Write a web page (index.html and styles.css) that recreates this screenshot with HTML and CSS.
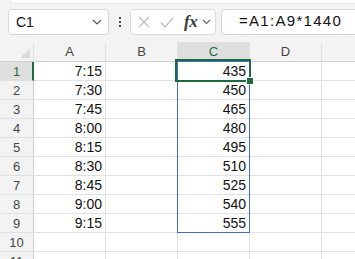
FILE: index.html
```html
<!DOCTYPE html>
<html lang="en">
<head>
    <meta charset="UTF-8">
    <title>Sheet1</title>
    <link rel="stylesheet" href="styles.css">
</head>
<body>
    <div class="ribbon"></div>

    <div class="formula-bar">
        <div class="name-box">
            <span>C1</span>
            <svg class="chev" width="10" height="6" viewBox="0 0 10 6"><path d="M1 1l4 4 4-4" fill="none" stroke="#555" stroke-width="1.2"/></svg>
        </div>
        <div class="more"><i></i><i></i><i></i></div>
        <div class="fx-box">
            <svg width="12" height="12" viewBox="0 0 12 12"><path d="M1 1l10 10M11 1L1 11" stroke="#bdbdbd" stroke-width="1.2" fill="none"/></svg>
            <svg width="14" height="11" viewBox="0 0 14 11"><path d="M1 5.5l4 4.5 8-9" stroke="#bdbdbd" stroke-width="1.2" fill="none"/></svg>
            <span class="fx">fx</span>
            <svg width="9" height="6" viewBox="0 0 9 6"><path d="M1 1l3.5 3.5L8 1" fill="none" stroke="#666" stroke-width="1.1"/></svg>
        </div>
        <div class="formula">=A1:A9*1440</div>
    </div>

    <div class="sheet">
        <div class="grid">
            <div class="head corner"><span class="tri"></span></div>
            <div class="head">A</div>
            <div class="head">B</div>
            <div class="head sel">C</div>
            <div class="head">D</div>
            <div class="head"></div>

            <div class="rh sel">1</div><div class="c">7:15</div><div class="c"></div><div class="c">435</div><div class="c"></div><div class="c"></div>
            <div class="rh">2</div><div class="c">7:30</div><div class="c"></div><div class="c">450</div><div class="c"></div><div class="c"></div>
            <div class="rh">3</div><div class="c">7:45</div><div class="c"></div><div class="c">465</div><div class="c"></div><div class="c"></div>
            <div class="rh">4</div><div class="c">8:00</div><div class="c"></div><div class="c">480</div><div class="c"></div><div class="c"></div>
            <div class="rh">5</div><div class="c">8:15</div><div class="c"></div><div class="c">495</div><div class="c"></div><div class="c"></div>
            <div class="rh">6</div><div class="c">8:30</div><div class="c"></div><div class="c">510</div><div class="c"></div><div class="c"></div>
            <div class="rh">7</div><div class="c">8:45</div><div class="c"></div><div class="c">525</div><div class="c"></div><div class="c"></div>
            <div class="rh">8</div><div class="c">9:00</div><div class="c"></div><div class="c">540</div><div class="c"></div><div class="c"></div>
            <div class="rh">9</div><div class="c">9:15</div><div class="c"></div><div class="c">555</div><div class="c"></div><div class="c"></div>
            <div class="rh">10</div><div class="c"></div><div class="c"></div><div class="c"></div><div class="c"></div><div class="c"></div>
            <div class="rh">11</div><div class="c"></div><div class="c"></div><div class="c"></div><div class="c"></div><div class="c"></div>
        </div>
        <div class="range"></div>
        <div class="active"><span class="handle"></span></div>
    </div>
</body>
</html>
```

FILE: styles.css
```css
body {
    margin: 0;
    width: 355px;
    height: 259px;
    overflow: hidden;
    background: #f3f3f3;
    font-family: "Liberation Sans", Arial, sans-serif;
    color: #222;
}
.ribbon {
    height: 3px;
    margin-left: 10px;
    background: #fff;
    border: 1px solid #e3e3e3;
    border-top: none;
    border-right: none;
    border-radius: 0 0 0 6px;
}
.formula-bar {
    display: flex;
    align-items: center;
    height: 26px;
    margin-top: 5px;
    padding-left: 8px;
}
.name-box {
    display: flex;
    align-items: center;
    justify-content: space-between;
    box-sizing: border-box;
    width: 101px;
    height: 26px;
    padding: 0 6px 0 7px;
    background: #fff;
    border: 1px solid #d6d6d6;
    border-radius: 4px;
    font-size: 14px;
    color: #111;
}
.more {
    display: flex;
    flex-direction: column;
    gap: 2px;
    width: 21px;
    align-items: center;
}
.more i {
    width: 2px;
    height: 2px;
    background: #444;
}
.fx-box {
    display: flex;
    align-items: center;
    box-sizing: border-box;
    width: 86px;
    height: 26px;
    padding-left: 7px;
    gap: 9px;
    background: #fff;
    border: 1px solid #dcdcdc;
    border-radius: 4px;
}
.fx-box svg:nth-child(2) {
    margin-left: 1px;
}
.fx {
    font-family: "Liberation Serif", "Times New Roman", serif;
    font-style: italic;
    font-weight: bold;
    font-size: 17px;
    color: #3a3a3a;
    margin-left: 1px;
    margin-right: -4px;
    letter-spacing: -0.5px;
}
.formula {
    flex: 1;
    box-sizing: border-box;
    height: 26px;
    margin-left: 5px;
    margin-right: -20px;
    padding: 2px 0 0 17px;
    background: #fff;
    border: 1px solid #d6d6d6;
    border-radius: 4px;
    font-size: 15px;
    letter-spacing: 1.3px;
    color: #111;
}
.sheet {
    position: relative;
    margin-top: 7px;
}
.grid {
    display: grid;
    grid-template-columns: 34px 72px 72px 72px 72px 72px;
    grid-template-rows: 20px;
    grid-auto-rows: 19px;
}
.grid > div {
    box-sizing: border-box;
    border-right: 1px solid #dadada;
    border-bottom: 1px solid #dadada;
    white-space: nowrap;
    overflow: hidden;
}
.head {
    background: #f3f3f3;
    text-align: center;
    font-size: 13px;
    line-height: 20px;
    color: #444;
    border-right-color: #e0e0e0 !important;
    border-bottom-color: #d0d0d0 !important;
}
.head.sel {
    background: #dedede;
    color: #1e6b41;
}
.corner {
    position: relative;
}
.tri {
    position: absolute;
    right: 3px;
    bottom: 3px;
    width: 0;
    height: 0;
    border-left: 10px solid transparent;
    border-bottom: 10px solid #dadada;
}
.rh {
    background: #f3f3f3;
    text-align: center;
    font-size: 13px;
    line-height: 19px;
    color: #444;
    border-bottom-color: #e0e0e0 !important;
    border-right-color: #cfcfcf !important;
}
.rh.sel {
    background: #dedede;
    color: #1e6b41;
    border-right: 2px solid #1e6b41 !important;
    padding-left: 1px;
}
.c {
    background: #fff;
    text-align: right;
    padding-right: 3px;
    font-size: 14px;
    line-height: 19px;
    color: #111;
    border-color: #e1e1e1 !important;
}
.range {
    position: absolute;
    left: 177px;
    top: 19px;
    width: 73px;
    height: 172px;
    box-sizing: border-box;
    border: 1px solid #3b6fc6;
}
.active {
    position: absolute;
    left: 175px;
    top: 17px;
    width: 76px;
    height: 23px;
    box-sizing: border-box;
    border: 2px solid #1e6b41;
}
.handle {
    position: absolute;
    right: -5px;
    bottom: -5px;
    width: 6px;
    height: 6px;
    background: #1e6b41;
    border: 1px solid #fff;
}
```
